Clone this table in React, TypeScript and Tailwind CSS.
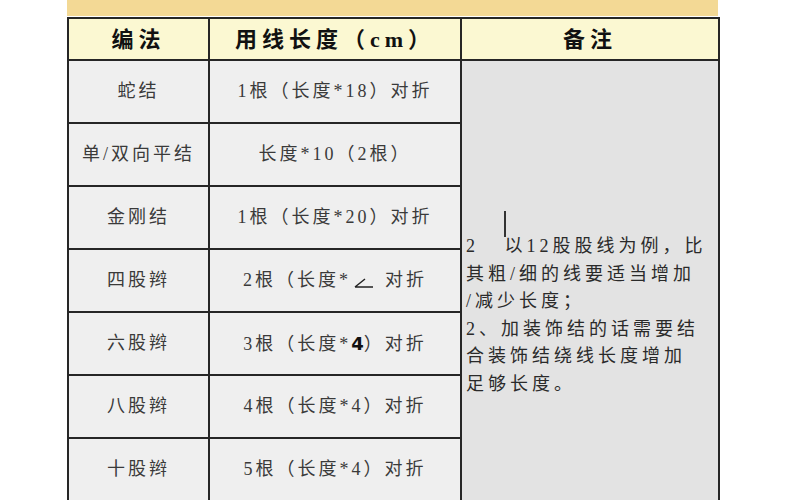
import React from "react";

const rows = [
  { name: "蛇结", len: "1根（长度*18）对折" },
  { name: "单/双向平结", len: "长度*10（2根）" },
  { name: "金刚结", len: "1根（长度*20）对折" },
  { name: "四股辫", len: "broken" },
  { name: "六股辫", len: "bold4" },
  { name: "八股辫", len: "4根（长度*4）对折" },
  { name: "十股辫", len: "5根（长度*4）对折" },
  { name: "", len: "" },
];

const noteLines = [
  "其粗/细的线要适当增加",
  "/减少长度；",
  "2、加装饰结的话需要结",
  "合装饰结绕线长度增加",
  "足够长度。",
];

const LenCell = ({ len }: { len: string }) => {
  if (len === "broken") {
    return (
      <span className="relative">
        2根（长度*
        <svg width="34" height="22" viewBox="0 0 34 22" className="inline-block align-middle">
          <path d="M4 16 L14 8 M4 16 L22 16" stroke="#222" strokeWidth="1.5" fill="none" />
        </svg>
        对折
      </span>
    );
  }
  if (len === "bold4") {
    return (
      <span>
        3根（长度*<b className="font-bold text-[#111] font-['DejaVu_Sans',sans-serif] tracking-normal">4</b>）对折
      </span>
    );
  }
  return <span>{len}</span>;
};

export default function App() {
  return (
    <div className="w-[800px] h-[500px] overflow-hidden bg-white font-['Liberation_Serif','Noto_Sans_CJK_SC',serif]">
      <div className="ml-[67px] w-[651px] h-[16px] bg-[#f3d995]" />
      <table className="ml-[67px] border-collapse table-fixed w-[651px] mt-[1px]">
        <colgroup>
          <col className="w-[141px]" />
          <col className="w-[252px]" />
          <col className="w-[258px]" />
        </colgroup>
        <thead>
          <tr className="h-[42px] bg-[#fbf8d2]">
            <th className="border-2 border-[#262626] text-[22px] font-bold text-[#111] tracking-[5px] text-center">编法</th>
            <th className="border-2 border-[#262626] text-[22px] font-bold text-[#111] tracking-[5px] text-center">用线长度（cm）</th>
            <th className="border-2 border-[#262626] text-[22px] font-bold text-[#111] tracking-[5px] text-center">备注</th>
          </tr>
        </thead>
        <tbody>
          {rows.map((r, i) => (
            <tr key={i} className="h-[63px]">
              <td className="border-2 border-[#262626] bg-[#efefef] text-center text-[18px] text-[#3a3a3a] tracking-[3px]">
                {r.name}
              </td>
              <td className="border-2 border-[#262626] bg-[#efefef] text-center text-[18px] text-[#3a3a3a] tracking-[3px]">
                <LenCell len={r.len} />
              </td>
              {i === 0 && (
                <td
                  rowSpan={rows.length}
                  className="relative border-2 border-[#262626] bg-[#e3e3e3] align-top pt-[172px] pl-[4px] text-[18px] leading-[27.5px] text-[#2a2a2a] tracking-[4px]"
                >
                  <span className="absolute left-[42px] top-[150px] w-[2px] h-[26px] bg-[#333]" />
                  <div>2&nbsp;&nbsp;&nbsp;以12股股线为例，比</div>
                  {noteLines.map((l) => (
                    <div key={l}>{l}</div>
                  ))}
                </td>
              )}
            </tr>
          ))}
        </tbody>
      </table>
    </div>
  );
}
